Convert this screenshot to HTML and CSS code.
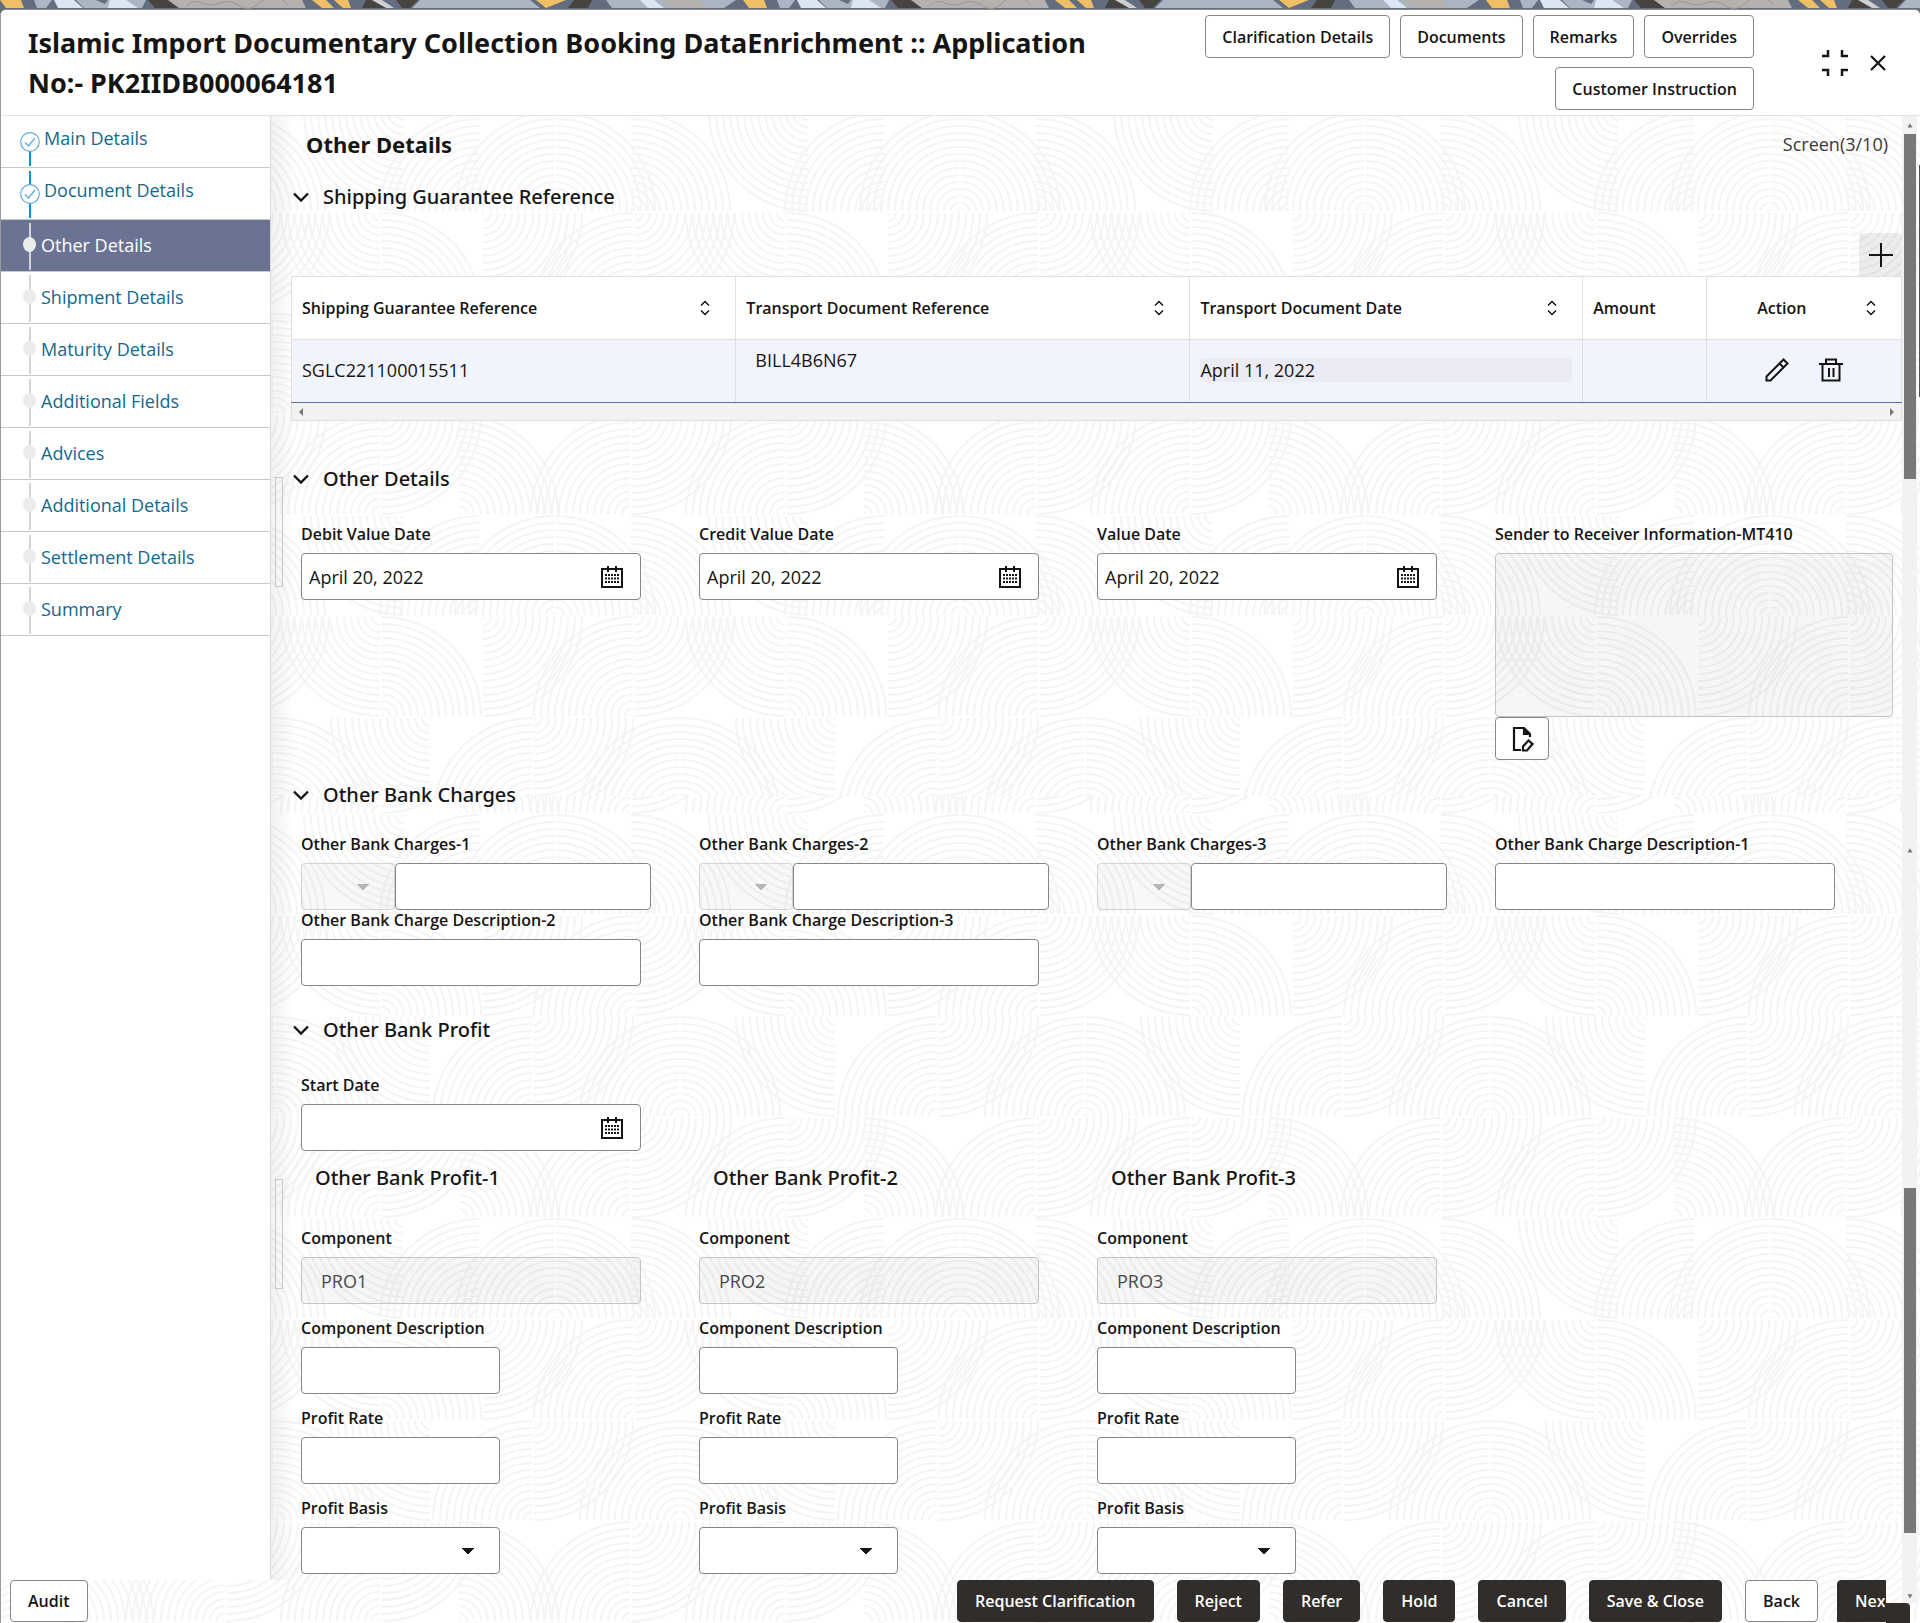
FILE: index.html
```html
<!DOCTYPE html>
<html lang="en">
<head>
    <meta charset="UTF-8">
    <title>Islamic Import Documentary Collection Booking DataEnrichment</title>
    <link rel="stylesheet" href="styles.css">
</head>
<body>
<!-- shared icons -->
<svg class="defs" aria-hidden="true">
    <symbol id="i-chevron" viewBox="0 0 16 10"><path d="M1 1.5l7 7 7-7" fill="none" stroke="currentColor" stroke-width="2.4"/></symbol>
    <symbol id="i-sort" viewBox="0 0 12 16"><path d="M2 5.5l4-4 4 4M2 10.5l4 4 4-4" fill="none" stroke="currentColor" stroke-width="1.5"/></symbol>
    <symbol id="i-cal" viewBox="0 0 24 24">
        <path d="M2 4h20v18H2z" fill="none" stroke="currentColor" stroke-width="2"/>
        <path d="M2 3h20v2H2z" fill="currentColor"/>
        <path d="M8 1v6M16 1v6" stroke="currentColor" stroke-width="2"/>
        <path d="M5 10h14M5 13.5h14M5 17h14" stroke="currentColor" stroke-width="2" stroke-dasharray="2 1"/>
    </symbol>
    <symbol id="i-done" viewBox="0 0 22 22">
        <circle cx="11" cy="11" r="9.3" fill="#fff" stroke="#5fa8dc" stroke-width="1.2"/>
        <path d="M6 11.5l3.5 3.5 6.5-8" fill="none" stroke="#5fa8dc" stroke-width="1.2"/>
    </symbol>
    <path id="q" fill="none" stroke="#f4f4f4" stroke-width="2" d="M1 0A1 1 0 0 1 0 1M8 0A8 8 0 0 1 0 8M15 0A15 15 0 0 1 0 15M22 0A22 22 0 0 1 0 22M29 0A29 29 0 0 1 0 29M36 0A36 36 0 0 1 0 36M43 0A43 43 0 0 1 0 43M50 0A50 50 0 0 1 0 50M57 0A57 57 0 0 1 0 57M64 0A64 64 0 0 1 0 64M71 0A71 71 0 0 1 0 71M78 0A78 78 0 0 1 0 78M85 0A85 85 0 0 1 0 85M92 0A92 92 0 0 1 0 92M99 0A99 99 0 0 1 0 99"/>
    <g id="tile">
        <!-- row 1 -->
        <use href="#q" transform="translate(1 100) scale(1 -1)"/>
        <use href="#q" transform="translate(404 100) scale(-1 -1)"/>
        <use href="#q" transform="translate(76 100) scale(1 -1)"/>
        <use href="#q" transform="translate(253 1) scale(-1 1)"/>
        <use href="#q" transform="translate(329 100) scale(-1 -1)"/>
        <!-- row 2 -->
        <use href="#q" transform="translate(78 201) scale(-1 -1)"/>
        <use href="#q" transform="translate(483 201) scale(-1 -1)"/>
        <use href="#q" transform="translate(80 102)"/>
        <use href="#q" transform="translate(230 102) scale(-1 1)"/>
        <use href="#q" transform="translate(232 201) scale(1 -1)"/>
        <use href="#q" transform="translate(333 102)"/>
        <use href="#q" transform="translate(-72 102)"/>
        <!-- row 3 -->
        <use href="#q" transform="translate(-21 203)"/>
        <use href="#q" transform="translate(384 203)"/>
        <use href="#q" transform="translate(124 302) scale(-1 -1)"/>
        <use href="#q" transform="translate(126 302) scale(1 -1)"/>
        <use href="#q" transform="translate(280 203) scale(-1 1)"/>
        <use href="#q" transform="translate(382 302) scale(-1 -1)"/>
        <!-- row 4 -->
        <use href="#q" transform="translate(75 403) scale(-1 -1)"/>
        <use href="#q" transform="translate(480 403) scale(-1 -1)"/>
        <use href="#q" transform="translate(77 304)"/>
        <use href="#q" transform="translate(230 403) scale(-1 -1)"/>
        <use href="#q" transform="translate(232 304)"/>
        <use href="#q" transform="translate(309 403) scale(1 -1)"/>
        <use href="#q" transform="translate(-96 403) scale(1 -1)"/>
    </g>
    <pattern id="waves-top" x="149" y="101" width="405" height="404" patternUnits="userSpaceOnUse"><use href="#tile"/></pattern>
    <pattern id="waves-bottom" x="149" y="-4" width="405" height="404" patternUnits="userSpaceOnUse"><use href="#tile"/></pattern>
    <pattern id="ribbon" width="743" height="9" patternUnits="userSpaceOnUse">
        <path fill="#626d80" d="M0 0h743v9H0z"/>
        <path fill="#efbf66" d="M0 0h21l3 8H6zM312 0h14l8 8h-12zM334 0h14l3 8h-8zM536 0h30l-20 8z"/>
        <path fill="#abb5c3" d="M34 0h18l-6 8h-9zM76 0h20l9 4 3-4h38l-4 8H84zM420 0h110l10 8H412zM606 0h130l-12 8H612z"/>
        <path fill="#dbe6f3" d="M54 0h20l9 8H58zM110 0h16l12 8h-30zM640 0h14l10 8h-16z"/>
        <path fill="#47433f" d="M148 0h20l11 8h-24zM366 0h14l6 8h-24zM396 0h22l-8 8h-8zM574 0h18l-4 8h-20z"/>
        <path fill="#b5b1ac" d="M168 0h134l4 8H179zM660 0h40l8 8h-34z"/>
        <path fill="#cfcfcf" d="M372 0h10l12 8h-8z"/>
        <path fill="none" stroke="#9a9691" d="M186 6q8-7 16-3t18 0 20 3 22-5 26 4"/>
    </pattern>
</svg>

<svg class="ribbon" aria-hidden="true"><rect width="100%" height="100%" fill="url(#ribbon)"/></svg>

<div class="shell">
    <svg class="waves" aria-hidden="true">
        <rect width="100%" height="786" fill="url(#waves-top)"/>
        <rect y="786" width="100%" height="100%" fill="url(#waves-bottom)"/>
    </svg>

    <header class="head">
        <h1>Islamic Import Documentary Collection Booking DataEnrichment :: Application No:- PK2IIDB000064181</h1>
        <div class="head-buttons">
            <button type="button" class="btn">Clarification Details</button>
            <button type="button" class="btn">Documents</button>
            <button type="button" class="btn">Remarks</button>
            <button type="button" class="btn">Overrides</button>
            <button type="button" class="btn">Customer Instruction</button>
        </div>
        <div class="head-icons">
            <button type="button" class="icon" aria-label="Collapse">
                <svg width="26" height="26" viewBox="0 0 26 26"><path d="M0 6h6V0M26 6h-6V0M0 20h6v6M26 20h-6v6" fill="none" stroke="currentColor" stroke-width="2.5"/></svg>
            </button>
            <button type="button" class="icon" aria-label="Close">
                <svg width="16" height="16" viewBox="0 0 16 16"><path d="M1 1l14 14M15 1L1 15" stroke="currentColor" stroke-width="2.2"/></svg>
            </button>
        </div>
    </header>

    <nav class="side">
        <a href="#" class="step done"><svg class="mark"><use href="#i-done"/></svg>Main Details</a>
        <a href="#" class="step done second"><svg class="mark"><use href="#i-done"/></svg>Document Details</a>
        <a href="#" class="step current"><span class="dot"></span>Other Details</a>
        <a href="#" class="step"><span class="dot"></span>Shipment Details</a>
        <a href="#" class="step"><span class="dot"></span>Maturity Details</a>
        <a href="#" class="step"><span class="dot"></span>Additional Fields</a>
        <a href="#" class="step"><span class="dot"></span>Advices</a>
        <a href="#" class="step"><span class="dot"></span>Additional Details</a>
        <a href="#" class="step"><span class="dot"></span>Settlement Details</a>
        <a href="#" class="step"><span class="dot"></span>Summary</a>
    </nav>

    <main class="content">
        <span class="grip"></span>
        <span class="grip grip-low"></span>
        <div class="title-row">
            <h2>Other Details</h2>
            <span class="screen">Screen(3/10)</span>
        </div>

        <section>
            <h3><svg class="chev"><use href="#i-chevron"/></svg>Shipping Guarantee Reference</h3>
            <div class="toolbar">
                <button type="button" class="add" aria-label="Add row">
                    <svg width="24" height="24" viewBox="0 0 24 24"><path d="M12 0v24M0 12h24" stroke="currentColor" stroke-width="2"/></svg>
                </button>
            </div>
            <table class="grid">
                <colgroup><col class="c1"><col class="c2"><col class="c3"><col class="c4"><col class="c5"></colgroup>
                <thead>
                    <tr>
                        <th><div class="th">Shipping Guarantee Reference<svg class="sort"><use href="#i-sort"/></svg></div></th>
                        <th><div class="th">Transport Document Reference<svg class="sort"><use href="#i-sort"/></svg></div></th>
                        <th><div class="th">Transport Document Date<svg class="sort"><use href="#i-sort"/></svg></div></th>
                        <th><div class="th">Amount</div></th>
                        <th><div class="th th-action">Action<svg class="sort"><use href="#i-sort"/></svg></div></th>
                    </tr>
                </thead>
                <tbody>
                    <tr>
                        <td>SGLC221100015511</td>
                        <td class="bill">BILL4B6N67</td>
                        <td><span class="date-chip">April 11, 2022</span></td>
                        <td></td>
                        <td>
                            <div class="row-actions">
                                <button type="button" class="icon" aria-label="Edit">
                                    <svg width="24" height="24" viewBox="0 0 24 24"><path d="M1.5 22.5v-4L18.5 1.5l4 4-17 17zM14.5 5.5l4 4" fill="none" stroke="currentColor" stroke-width="2"/></svg>
                                </button>
                                <button type="button" class="icon" aria-label="Delete">
                                    <svg width="24" height="24" viewBox="0 0 24 24"><path d="M0 6h24M7 6V1.5h10V6M3.5 6v16.5h17V6M10 10v9M14.5 10v9" fill="none" stroke="currentColor" stroke-width="2"/></svg>
                                </button>
                            </div>
                        </td>
                    </tr>
                </tbody>
            </table>
            <div class="hscroll">
                <svg width="4" height="8" viewBox="0 0 4 8"><path d="M4 0v8L0 4z"/></svg>
                <svg width="4" height="8" viewBox="0 0 4 8"><path d="M0 0v8l4-4z"/></svg>
            </div>
        </section>

        <section class="sec-details">
            <h3><svg class="chev"><use href="#i-chevron"/></svg>Other Details</h3>
            <div class="fields">
                <div class="field">
                    <label for="debit">Debit Value Date</label>
                    <div class="date"><input id="debit" type="text" value="April 20, 2022"><button type="button" class="icon" aria-label="Pick date"><svg class="cal"><use href="#i-cal"/></svg></button></div>
                </div>
                <div class="field">
                    <label for="credit">Credit Value Date</label>
                    <div class="date"><input id="credit" type="text" value="April 20, 2022"><button type="button" class="icon" aria-label="Pick date"><svg class="cal"><use href="#i-cal"/></svg></button></div>
                </div>
                <div class="field">
                    <label for="value">Value Date</label>
                    <div class="date"><input id="value" type="text" value="April 20, 2022"><button type="button" class="icon" aria-label="Pick date"><svg class="cal"><use href="#i-cal"/></svg></button></div>
                </div>
                <div class="field">
                    <label for="mt410">Sender to Receiver Information-MT410</label>
                    <textarea id="mt410" disabled></textarea>
                    <button type="button" class="btn note" aria-label="Edit text">
                        <svg width="22" height="26" viewBox="0 0 22 26"><path d="M9 24H2V2h10l6 6v3M12 2v6h6" fill="none" stroke="currentColor" stroke-width="2.2"/><path d="M12 2l6 6h-6z" fill="currentColor"/><path d="M11 24.5v-4l5.5-6 4 3.5-5.5 6.5z" fill="none" stroke="currentColor" stroke-width="2.2"/></svg>
                    </button>
                </div>
            </div>
        </section>

        <section class="sec-charges">
            <h3><svg class="chev"><use href="#i-chevron"/></svg>Other Bank Charges</h3>
            <div class="fields">
                <div class="field">
                    <label for="charge1">Other Bank Charges-1</label>
                    <div class="money"><select aria-label="Currency 1" disabled></select><input id="charge1" class="box" type="text"></div>
                </div>
                <div class="field">
                    <label for="charge2">Other Bank Charges-2</label>
                    <div class="money"><select aria-label="Currency 2" disabled></select><input id="charge2" class="box" type="text"></div>
                </div>
                <div class="field">
                    <label for="charge3">Other Bank Charges-3</label>
                    <div class="money"><select aria-label="Currency 3" disabled></select><input id="charge3" class="box" type="text"></div>
                </div>
                <div class="field">
                    <label for="desc1">Other Bank Charge Description-1</label>
                    <input id="desc1" class="box" type="text">
                </div>
                <div class="field">
                    <label for="desc2">Other Bank Charge Description-2</label>
                    <input id="desc2" class="box" type="text">
                </div>
                <div class="field">
                    <label for="desc3">Other Bank Charge Description-3</label>
                    <input id="desc3" class="box" type="text">
                </div>
            </div>
        </section>

        <section class="sec-profit">
            <h3><svg class="chev"><use href="#i-chevron"/></svg>Other Bank Profit</h3>
            <div class="fields">
                <div class="field">
                    <label for="start">Start Date</label>
                    <div class="date"><input id="start" type="text"><button type="button" class="icon" aria-label="Pick date"><svg class="cal"><use href="#i-cal"/></svg></button></div>
                </div>
            </div>
            <div class="profits">
                <div class="profit">
                    <h4>Other Bank Profit-1</h4>
                    <div class="field"><label for="comp1">Component</label><input id="comp1" class="box" type="text" value="PRO1" disabled></div>
                    <div class="field"><label for="cdesc1">Component Description</label><input id="cdesc1" class="box short" type="text"></div>
                    <div class="field"><label for="rate1">Profit Rate</label><input id="rate1" class="box short" type="text"></div>
                    <div class="field"><label for="basis1">Profit Basis</label><select id="basis1" class="short"></select></div>
                </div>
                <div class="profit">
                    <h4>Other Bank Profit-2</h4>
                    <div class="field"><label for="comp2">Component</label><input id="comp2" class="box" type="text" value="PRO2" disabled></div>
                    <div class="field"><label for="cdesc2">Component Description</label><input id="cdesc2" class="box short" type="text"></div>
                    <div class="field"><label for="rate2">Profit Rate</label><input id="rate2" class="box short" type="text"></div>
                    <div class="field"><label for="basis2">Profit Basis</label><select id="basis2" class="short"></select></div>
                </div>
                <div class="profit">
                    <h4>Other Bank Profit-3</h4>
                    <div class="field"><label for="comp3">Component</label><input id="comp3" class="box" type="text" value="PRO3" disabled></div>
                    <div class="field"><label for="cdesc3">Component Description</label><input id="cdesc3" class="box short" type="text"></div>
                    <div class="field"><label for="rate3">Profit Rate</label><input id="rate3" class="box short" type="text"></div>
                    <div class="field"><label for="basis3">Profit Basis</label><select id="basis3" class="short"></select></div>
                </div>
            </div>
        </section>
    </main>

    <div class="rail" aria-hidden="true">
        <svg class="arrow" viewBox="0 0 14 18"><path d="M4 12l3-5 3 5z"/></svg>
        <span class="thumb"></span>
        <span class="gap-a"></span>
        <svg class="arrow" viewBox="0 0 14 18"><path d="M4 12l3-5 3 5z"/></svg>
        <span class="gap-b"></span>
        <span class="thumb"></span>
        <span class="gap-c"></span>
        <svg class="arrow" viewBox="0 0 14 18"><path d="M4 7l3 5 3-5z"/></svg>
    </div>

    <footer class="foot">
        <button type="button" class="btn">Audit</button>
        <div class="foot-buttons">
            <button type="button" class="btn dark">Request Clarification</button>
            <button type="button" class="btn dark">Reject</button>
            <button type="button" class="btn dark">Refer</button>
            <button type="button" class="btn dark">Hold</button>
            <button type="button" class="btn dark">Cancel</button>
            <button type="button" class="btn dark">Save &amp; Close</button>
            <button type="button" class="btn">Back</button>
            <button type="button" class="btn dark next">Next</button>
        </div>
    </footer>
    <span class="corner"></span>
</div>
</body>
</html>
```
FILE: styles.css
```css
* {
    box-sizing: border-box;
}
body {
    margin: 0;
    min-height: 100vh;
    display: flex;
    flex-direction: column;
    background: #626d80;
    color: #161513;
    font: 18px/24px "Open Sans", "Noto Sans", sans-serif;
}
h1, h2, h3, h4 {
    margin: 0;
    font-family: "Noto Sans", sans-serif;
}
.defs {
    position: absolute;
    width: 0;
    height: 0;
}
.ribbon {
    display: block;
    width: 100%;
    height: 9px;
}

.shell {
    position: relative;
    flex: 1;
    display: grid;
    grid-template-columns: 270px 1fr 18px;
    grid-template-rows: auto 1fr auto;
    background: #fff;
    border-top: 1px solid #8b8b8b;
    border-left: 1px solid #9a9a9a;
    border-radius: 6px 6px 0 0;
    overflow: hidden;
}
.waves {
    position: absolute;
    width: 100%;
    height: 100%;
}

/* buttons */
button {
    font: 600 16px/22px "Open Sans", "Noto Sans", sans-serif;
    color: #161513;
    white-space: nowrap;
}
.btn {
    height: 43px;
    padding: 0 16px;
    background: #fff;
    border: 1px solid #8b8580;
    border-radius: 4px;
}
.btn.dark {
    background: #312d2a;
    border-color: #312d2a;
    color: #fff;
}
.icon {
    display: flex;
    padding: 0;
    border: 0;
    background: none;
}

/* header */
.head {
    position: relative;
    grid-column: 1 / -1;
    display: flex;
    justify-content: space-between;
    align-items: center;
    height: 106px;
    padding: 0 34px 0 27px;
    background: #fff;
    border-bottom: 1px solid #e2e2e2;
}
.head h1 {
    flex: 0 1 1100px;
    font-size: 27px;
    line-height: 40px;
}
.head-buttons {
    flex: 0 0 560px;
    display: flex;
    flex-wrap: wrap;
    justify-content: flex-end;
    gap: 9px 10px;
    margin: 0 68px 0 auto;
}
.head-icons {
    display: flex;
    align-items: center;
    gap: 22px;
}

/* steps */
.side {
    position: relative;
    background: #fff;
    border-right: 1px solid #dcdcdc;
}
.step {
    position: relative;
    display: flex;
    align-items: center;
    height: 52px;
    padding: 0 0 2px 22px;
    border-bottom: 1px solid #c8c8c8;
    color: #11698e;
    text-decoration: none;
}
/* connector runs behind the marker */
.step::before {
    content: "";
    position: absolute;
    left: 28px;
    top: 3px;
    bottom: 1px;
    width: 2px;
    background: #d4d4d4;
}
.dot {
    position: relative;
    width: 13px;
    height: 15px;
    margin-right: 5px;
    border-radius: 50%;
    background: #ececeb;
}
.mark {
    position: relative;
    width: 22px;
    height: 22px;
    margin: 8px 3px 0 0;
}
.done {
    padding: 0 0 8px 18px;
}
.done::before {
    background: #0d90cf;
    top: 34px;
}
.second::before {
    top: 3px;
}
.current {
    background: #6b7394;
    color: #fff;
}

/* content */
.content {
    position: relative;
    padding: 0 0 5px 20px;
    background: linear-gradient(90deg, rgba(0, 0, 0, .05), transparent 24px);
}
.grip {
    position: absolute;
    left: 4px;
    top: 361px;
    width: 8px;
    height: 110px;
    border: 1px solid #c9c9c9;
}
.grip-low {
    top: 1063px;
}
.title-row {
    display: flex;
    justify-content: space-between;
    align-items: center;
    height: 59px;
    padding: 0 14px 3px 15px;
}
.title-row h2 {
    font-size: 22px;
    font-weight: 700;
}
.screen {
    color: #3a3836;
}
h3 {
    display: flex;
    align-items: center;
    gap: 14px;
    height: 44px;
    padding-left: 2px;
    font-size: 20px;
    font-weight: 500;
}
.chev {
    width: 16px;
    height: 10px;
}
.toolbar {
    display: flex;
    justify-content: flex-end;
    margin-top: 14px;
}
.add {
    display: flex;
    align-items: center;
    justify-content: center;
    width: 43px;
    height: 43px;
    border: 0;
    border-radius: 4px 4px 0 0;
    background: rgba(22, 21, 19, .08);
}

/* table */
.grid {
    width: 100%;
    table-layout: fixed;
    border-collapse: collapse;
    background: #fff;
    border: 1px solid #e0e0e0;
}
.c1 { width: 27.6%; }
.c2 { width: 28.2%; }
.c3 { width: 24.4%; }
.c4 { width: 7.7%; }
.grid th, .grid td {
    height: 63px;
    padding: 0 10px;
    border: 1px solid #e0e0e0;
    text-align: left;
}
.grid td {
    padding-bottom: 2px;
    background: #f1f4fd;
    border-bottom-color: #5f6c9c;
}
.th {
    display: flex;
    justify-content: space-between;
    align-items: center;
    font: 600 16px/22px "Open Sans", "Noto Sans", sans-serif;
}
.th-action {
    padding-left: 40px;
}
.sort {
    width: 12px;
    height: 16px;
    margin-right: 14px;
}
.grid .bill {
    padding: 8px 19px;
    vertical-align: top;
}
.date-chip {
    display: block;
    border-radius: 4px;
    background: #eaebf4;
}
.row-actions {
    display: flex;
    justify-content: center;
    gap: 30px;
}
.hscroll {
    display: flex;
    justify-content: space-between;
    align-items: center;
    height: 18px;
    padding: 0 7px;
    background: #f2f2f2;
    border: 1px solid #e0e0e0;
    border-top: 0;
    fill: #777;
}

/* form */
.sec-details { margin-top: 36px; }
.sec-charges { margin-top: 13px; }
.sec-profit { margin-top: 22px; }
.fields, .profits {
    display: grid;
    grid-template-columns: repeat(4, 1fr);
    padding: 0 9px 0 10px;
}
.fields { margin-top: 23px; }
.sec-charges .fields { margin-top: 17px; }
.field label {
    display: block;
    margin-bottom: 9px;
    font-size: 16px;
    font-weight: 600;
    line-height: 20px;
}
.box, .date, select, textarea {
    display: block;
    width: calc(100% - 58px);
    height: 47px;
    border: 1px solid #8b8580;
    border-radius: 4px;
    background: #fff;
}
input {
    font: inherit;
    color: inherit;
}
.box {
    padding: 0 19px;
}
.date {
    display: flex;
    align-items: center;
    padding: 0 16px 0 7px;
}
.date input {
    flex: 1;
    min-width: 0;
    padding: 0;
    border: 0;
}
.cal {
    width: 24px;
    height: 24px;
}
textarea {
    width: 100%;
    height: 164px;
    resize: none;
}
textarea:disabled, input:disabled, select:disabled {
    background-color: rgba(22, 21, 19, .04);
    border-color: #c4c4c4;
    color: #4a4a4a;
}
.note {
    display: block;
    width: 54px;
    padding: 0 0 0 16px;
    line-height: 0;
    text-align: left;
}
.money {
    display: flex;
}
.money select {
    width: 94px;
}
.money .box {
    width: calc(100% - 142px);
}
select {
    appearance: none;
    background-image: linear-gradient(to bottom right, #161513 50%, transparent 51%), linear-gradient(to bottom left, #161513 50%, transparent 51%);
    background-size: 6px 6px;
    background-position: right 25px center, right 31px center;
    background-repeat: no-repeat;
}
select:disabled {
    background-image: linear-gradient(to bottom right, #999 50%, transparent 51%), linear-gradient(to bottom left, #999 50%, transparent 51%);
}
.profits {
    margin-top: 5px;
}
.profit {
    display: flex;
    flex-direction: column;
    gap: 14px;
}
.profit h4 {
    height: 44px;
    margin-bottom: 14px;
    padding-left: 14px;
    font-size: 20px;
    font-weight: 500;
    line-height: 44px;
}
.field .short {
    width: 50%;
}

/* scroll bar */
.rail {
    position: relative;
    grid-column: 3;
    grid-row: 2 / 4;
    display: flex;
    flex-direction: column;
    padding: 0 4px 18px 2px;
    background:
        linear-gradient(#555, #555) no-repeat right 49px / 1px 232px,
        linear-gradient(#f2f2f2, #f2f2f2) no-repeat 0 0 / 15px calc(100% - 20px);
}
.arrow {
    flex: none;
    width: 12px;
    height: 18px;
    fill: #777;
}
.thumb {
    flex: none;
    height: 345px;
    background: #787878;
}
.gap-a { flex: 360; }
.gap-b { flex: 327; }
.gap-c { flex: 54; }

/* footer */
.foot {
    position: relative;
    grid-column: 1 / 3;
    grid-row: 3;
    display: flex;
    justify-content: space-between;
    padding: 0 16px 1px 9px;
}
.foot .btn {
    height: 42px;
    padding: 0 17px;
}
.foot-buttons {
    display: flex;
    gap: 23px;
}
.foot-buttons .next {
    width: 49px;
    margin-left: -4px;
    border-radius: 4px 0 0 0;
    text-align: left;
    overflow: hidden;
}
.corner {
    position: absolute;
    right: 10px;
    bottom: 0;
    width: 24px;
    height: 20px;
    border-radius: 0 4px 0 0;
    background: #312d2a;
}
```
